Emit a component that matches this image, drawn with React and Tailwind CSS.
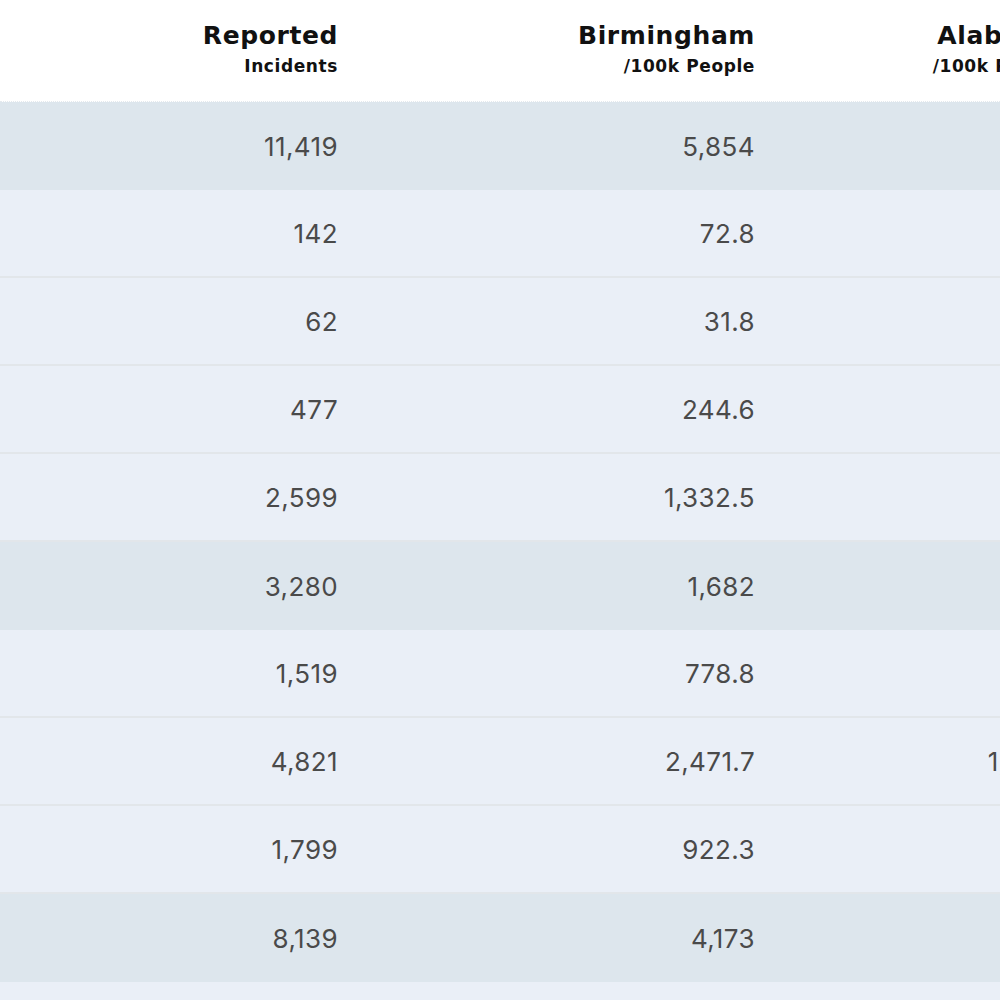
const rows = [
  { reported: '11,419', city: '5,854', state: '3,051', shade: true },
  { reported: '142', city: '72.8', state: '110.4' },
  { reported: '62', city: '31.8', state: '21.9' },
  { reported: '477', city: '244.6', state: '275.3' },
  { reported: '2,599', city: '1,332.5', state: '789.2' },
  { reported: '3,280', city: '1,682', state: '1,352', shade: true },
  { reported: '1,519', city: '778.8', state: '864.2' },
  { reported: '4,821', city: '2,471.7', state: '1,814.4' },
  { reported: '1,799', city: '922.3', state: '837.1' },
  { reported: '8,139', city: '4,173', state: '2,512', shade: true },
  { reported: '', city: '', state: '' },
];

function HeaderCell({ title, sub }) {
  return (
    <div className="flex flex-col items-end" style={{ fontFamily: '"DejaVu Sans", sans-serif' }}>
      <div className="text-[25px] leading-[30px] font-bold text-[#111] tracking-[0.6px]">{title}</div>
      <div className="text-[17px] leading-[22px] mt-[4px] font-bold text-[#111] tracking-[0.6px]">{sub}</div>
    </div>
  );
}

export default function App() {
  return (
    <div
      className="w-[1000px] h-[1000px] overflow-hidden bg-white"
      style={{ fontFamily: 'Inter, "Open Sans", sans-serif' }}
    >
      <div className="w-[1100px]">
        {/* Header */}
        <div className="grid grid-cols-[338px_417px_309px] h-[102px] pt-[21px] border-b border-dotted border-[#e4e9ee]">
          <HeaderCell title="Reported" sub="Incidents" />
          <HeaderCell title="Birmingham" sub="/100k People" />
          <HeaderCell title="Alabama" sub="/100k People" />
        </div>

        {/* Body */}
        {rows.map((r, i) => (
          <div
            key={i}
            className={`grid grid-cols-[338px_417px_320px] h-[88px] items-center text-[26px] tracking-[0.4px] text-[#4a4a4a] ${
              r.shade ? 'bg-[#dde6ed]' : 'bg-[#eaeff7] border-b-2 border-[#e2e6ea]'
            }`}
          >
            <div className="text-right">{r.reported}</div>
            <div className="text-right">{r.city}</div>
            <div className="text-right">{r.state}</div>
          </div>
        ))}
      </div>
    </div>
  );
}
